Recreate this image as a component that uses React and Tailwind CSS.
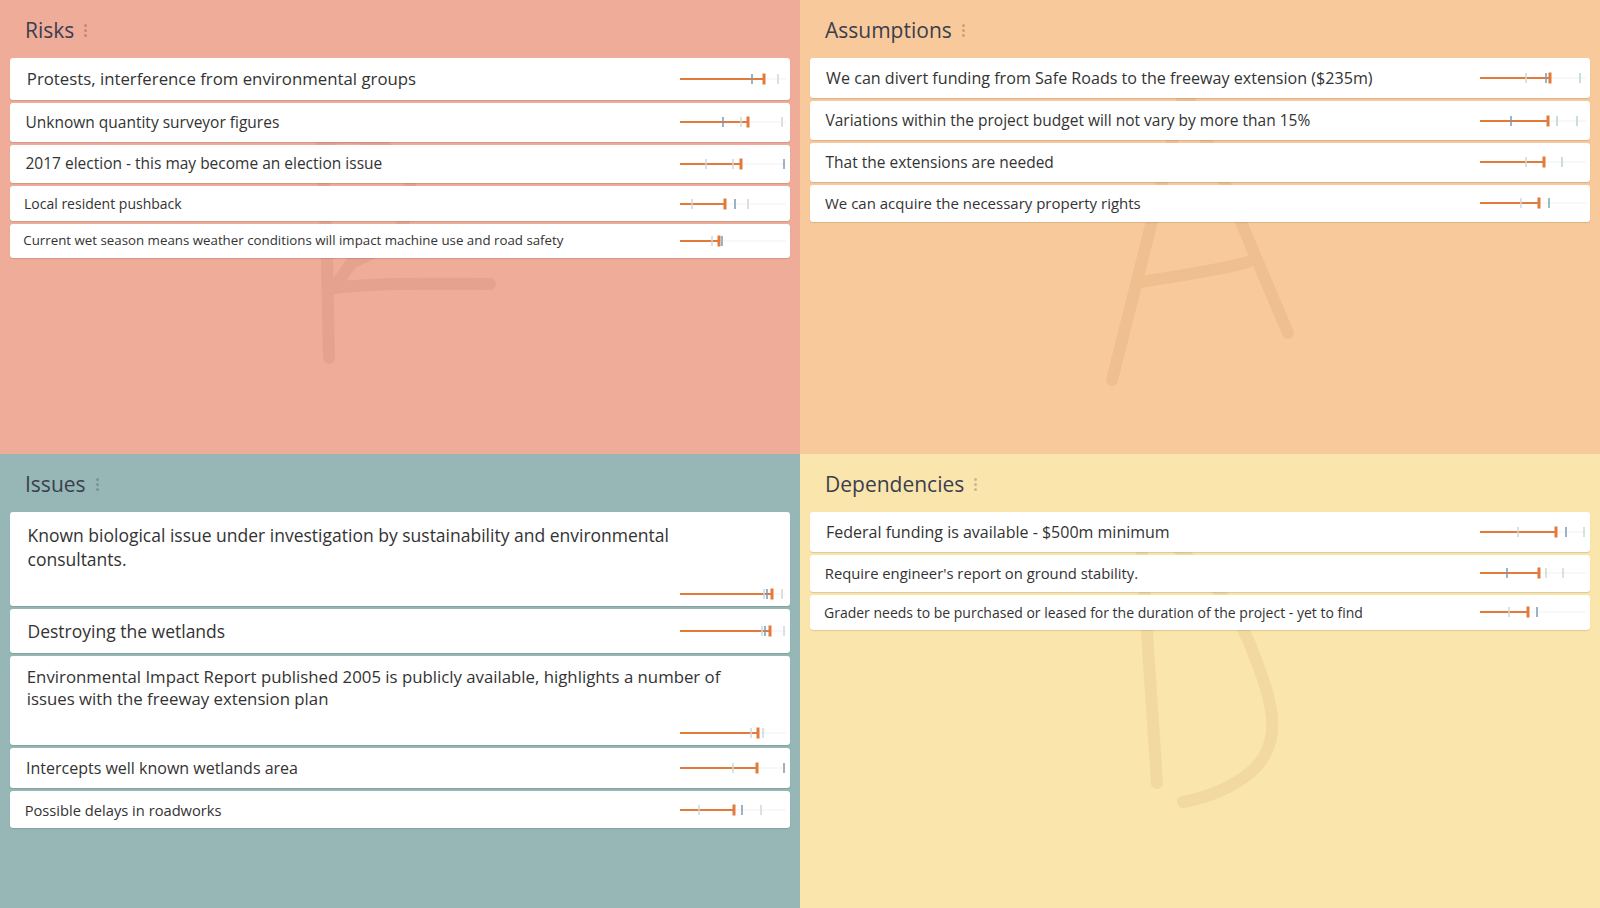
import React from "react";

// tick colours for the small markers on each bar
const tickColor = {
  b: "#7c99b5",
  l: "#cdd9da",
  lt: "#b7d5d3",
  t: "#6fb2af",
};

const risks = [
  { text: "Protests, interference from environmental groups", size: "text-[16.8px]", val: 84, ticks: [[72, "b"], [98, "l"]] },
  { text: "Unknown quantity surveyor figures", size: "text-[15.5px]", val: 68, ticks: [[43, "b"], [61, "l"], [102, "l"]] },
  { text: "2017 election - this may become an election issue", size: "text-[15.5px]", val: 61, ticks: [[26, "l"], [53, "l"], [104, "b"]] },
  { text: "Local resident pushback", size: "text-[14px]", val: 45, ticks: [[12, "l"], [55, "b"], [68, "l"]] },
  { text: "Current wet season means weather conditions will impact machine use and road safety", size: "text-[13.3px]", val: 39, ticks: [[32, "l"], [42, "b"]] },
];

const assumptions = [
  { text: "We can divert funding from Safe Roads to the freeway extension ($235m)", size: "text-[16.1px]", val: 70, ticks: [[46, "l"], [66, "b"], [100, "lt"]] },
  { text: "Variations within the project budget will not vary by more than 15%", size: "text-[15.5px]", val: 68, ticks: [[31, "b"], [77, "lt"], [97, "lt"]] },
  { text: "That the extensions are needed", size: "text-[15.5px]", val: 64, ticks: [[46, "l"], [82, "lt"]] },
  { text: "We can acquire the necessary property rights", size: "text-[15px]", val: 59, ticks: [[41, "l"], [69, "t"]] },
];

// multi-line cards carry their own spacing classes
const issues = [
  {
    multi: "pt-[0.68em] leading-[1.35]",
    gap: "mt-[11px]",
    text: "Known biological issue under investigation by sustainability and environmental consultants.",
    size: "text-[17.5px]",
    val: 92,
    ticks: [[84, "l"], [87, "b"], [102, "l"]],
  },
  { text: "Destroying the wetlands", size: "text-[17.5px]", val: 90, ticks: [[82, "l"], [85, "b"], [104, "l"]] },
  {
    multi: "pt-[0.6em] leading-[1.32]",
    gap: "mt-[11px]",
    text: "Environmental Impact Report published 2005 is publicly available, highlights a number of issues with the freeway extension plan",
    size: "text-[16.8px]",
    val: 78,
    ticks: [[71, "l"], [83, "l"]],
  },
  { text: "Intercepts well known wetlands area", size: "text-[16px]", val: 77, ticks: [[53, "l"], [104, "b"]] },
  { text: "Possible delays in roadworks", size: "text-[14.7px]", val: 54, ticks: [[19, "l"], [62, "b"], [81, "l"]] },
];

const dependencies = [
  { text: "Federal funding is available - $500m minimum", size: "text-[16px]", val: 76, ticks: [[38, "l"], [86, "b"], [104, "l"]] },
  { text: "Require engineer's report on ground stability.", size: "text-[14.8px]", val: 59, ticks: [[27, "b"], [66, "l"], [83, "l"]] },
  { text: "Grader needs to be purchased or leased for the duration of the project - yet to find", size: "text-[14px]", val: 48, ticks: [[29, "l"], [57, "b"]] },
];

function Bar({ val, ticks }) {
  return (
    <svg width="110" height="24" viewBox="0 0 110 24" className="shrink-0">
      <line x1="0" y1="12" x2="106" y2="12" stroke="#f1f1f1" strokeWidth="1" />
      <line x1="0" y1="12" x2={val} y2="12" stroke="#e17a3b" strokeWidth="2" />
      {ticks.map(([x, c], i) => (
        <rect key={i} x={x - 0.75} y="7" width="1.5" height="10" fill={tickColor[c]} />
      ))}
      <rect x={val - 1.5} y="6.5" width="3" height="11" fill="#e17a3b" />
    </svg>
  );
}

function Card({ item }) {
  if (item.multi) {
    return (
      <div className={`rounded-[3px] bg-white shadow-[0_1px_1px_rgba(0,0,0,0.12)] ${item.size}`}>
        <div className={`pl-[1em] pr-[45px] text-[#333] ${item.multi}`}>{item.text}</div>
        <div className={`flex justify-end h-[24px] ${item.gap}`}>
          <Bar val={item.val} ticks={item.ticks} />
        </div>
      </div>
    );
  }
  return (
    <div className={`flex items-center rounded-[3px] bg-white shadow-[0_1px_1px_rgba(0,0,0,0.12)] ${item.size}`}>
      <div className="flex-1 py-[0.5em] pl-[1em] leading-[1.5] text-[#333] whitespace-nowrap">{item.text}</div>
      <Bar val={item.val} ticks={item.ticks} />
    </div>
  );
}

function Quadrant({ title, items, bg, mark }) {
  return (
    <div className={`relative overflow-hidden ${bg}`}>
      {mark}
      <div className="relative z-10">
        <div className="h-[58px] flex items-center pl-[25px] pt-[3px] gap-[10px]">
          <h2 className="text-[21px] leading-none text-[#3b3e4e]">{title}</h2>
          <div className="flex flex-col gap-[2px]">
            <span className="w-[3px] h-[3px] rounded-full bg-black/20" />
            <span className="w-[3px] h-[3px] rounded-full bg-black/20" />
            <span className="w-[3px] h-[3px] rounded-full bg-black/20" />
          </div>
        </div>
        <div className="px-[10px] flex flex-col gap-[3px]">
          {items.map((it, i) => (
            <Card key={i} item={it} />
          ))}
        </div>
      </div>
    </div>
  );
}

// big brush letters behind each board
const MarkR = (
  <svg className="absolute inset-0 pointer-events-none" width="800" height="454">
    <g fill="none" stroke="#e4a28f" strokeWidth="12" strokeLinecap="round" strokeLinejoin="round">
      <path d="M322 140 L327 260 L329 358" />
      <path d="M327 140 C420 120 445 230 352 262 L334 288" />
      <path d="M334 288 C380 282 445 284 490 284" />
    </g>
  </svg>
);

const MarkA = (
  <svg className="absolute inset-0 pointer-events-none" width="800" height="454">
    <g fill="none" stroke="#efbf8f" strokeWidth="12" strokeLinecap="round" strokeLinejoin="round">
      <path d="M385 90 L312 380" />
      <path d="M385 90 L488 333" />
      <path d="M340 282 C380 276 420 270 448 262" />
    </g>
  </svg>
);

const MarkD = (
  <svg className="absolute inset-0 pointer-events-none" width="800" height="454">
    <g fill="none" stroke="#f1d9a0" strokeWidth="12" strokeLinecap="round" strokeLinejoin="round">
      <path d="M341 80 L347 179 L357 329" />
      <path d="M360 80 C400 110 437 150 456 206 C476 256 481 291 451 318 C429 336 405 344 383 348" />
    </g>
  </svg>
);

export default function App() {
  return (
    <div className="w-[1600px] h-[908px] grid grid-cols-2 grid-rows-2 font-['Open_Sans',sans-serif]">
      <Quadrant title="Risks" items={risks} bg="bg-[#eeac99]" mark={MarkR} />
      <Quadrant title="Assumptions" items={assumptions} bg="bg-[#f8ca9b]" mark={MarkA} />
      <Quadrant title="Issues" items={issues} bg="bg-[#96b7b6]" />
      <Quadrant title="Dependencies" items={dependencies} bg="bg-[#fae5ad]" mark={MarkD} />
    </div>
  );
}
